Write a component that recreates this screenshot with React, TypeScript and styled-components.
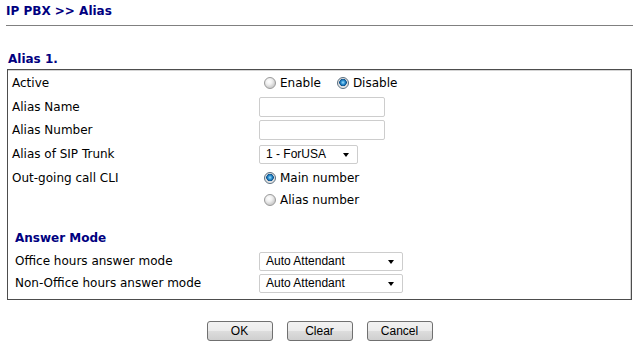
import React from "react";
import styled, { createGlobalStyle } from "styled-components";

const GlobalStyle = createGlobalStyle`
  body {
    margin: 0;
    background: #fff;
    font-family: "DejaVu Sans", Verdana, sans-serif;
    font-size: 12px;
    color: #000;
  }
`;

const NAVY = "#000080";

const App = () => {
  return (
    <Page>
      <GlobalStyle />
      <Title>IP PBX &gt;&gt; Alias</Title>
      <Rule />
      <SectionTitle>Alias 1.</SectionTitle>
      <Panel>
        <Row $h={24}>
          <Label>Active</Label>
          <Field>
            <Radio label="Enable" />
            <Radio label="Disable" checked gap={16} />
          </Field>
        </Row>
        <Row $h={23}>
          <Label>Alias Name</Label>
          <Field>
            <TextInput type="text" />
          </Field>
        </Row>
        <Row $h={24}>
          <Label>Alias Number</Label>
          <Field>
            <TextInput type="text" />
          </Field>
        </Row>
        <Row $h={24}>
          <Label>Alias of SIP Trunk</Label>
          <Field>
            <Select $w={99}>
              <span>1 - ForUSA</span>
              <Arrow />
            </Select>
          </Field>
        </Row>
        <Row $h={23}>
          <Label>Out-going call CLI</Label>
          <Field>
            <Radio label="Main number" checked />
          </Field>
        </Row>
        <Row $h={22}>
          <Label />
          <Field>
            <Radio label="Alias number" />
          </Field>
        </Row>

        <SubSection>
          <SubTitle>Answer Mode</SubTitle>
          <SubRow $h={22}>
            <Label>Office hours answer mode</Label>
            <Field>
              <Select $w={144}>
                <span>Auto Attendant</span>
                <Arrow />
              </Select>
            </Field>
          </SubRow>
          <SubRow $h={22}>
            <Label>Non-Office hours answer mode</Label>
            <Field>
              <Select $w={144}>
                <span>Auto Attendant</span>
                <Arrow />
              </Select>
            </Field>
          </SubRow>
        </SubSection>
      </Panel>
      <ButtonBar>
        <Button>OK</Button>
        <Button>Clear</Button>
        <Button>Cancel</Button>
      </ButtonBar>
    </Page>
  );
};

export default App;

function Radio({ label, checked, gap }: { label: string; checked?: boolean; gap?: number }) {
  return (
    <RadioLabel $gap={gap ?? 5}>
      <RadioDot $checked={!!checked} />
      {label}
    </RadioLabel>
  );
}

const Page = styled.div`
  padding: 4px 6px 0;
  width: 627px;
`;

const Title = styled.h1`
  margin: 0;
  font-size: 12px;
  line-height: 14px;
  font-weight: bold;
  color: ${NAVY};
`;

const Rule = styled.div`
  margin-top: 7px;
  border-top: 1px solid #808080;
`;

const SectionTitle = styled.h2`
  margin: 26px 0 0 2px;
  font-size: 12px;
  line-height: 14px;
  font-weight: bold;
  color: ${NAVY};
`;

const Panel = styled.div`
  margin: 3px 1px 0 1px;
  border: 1px solid #4d4d4d;
  box-shadow: inset 0 1px 0 #d4d4d4, inset -1px 0 0 #d4d4d4;
  padding: 1px 4px 5px;
`;

const Row = styled.div<{ $h: number }>`
  display: grid;
  grid-template-columns: 247px 1fr;
  align-items: center;
  height: ${(p) => p.$h}px;
`;

const SubRow = styled(Row)`
  grid-template-columns: 244px 1fr;
`;

const Label = styled.div`
  line-height: 14px;
  white-space: nowrap;
`;

const Field = styled.div`
  display: flex;
  align-items: center;
`;

const SubSection = styled.div`
  margin-top: 15px;
  padding-left: 3px;
`;

const SubTitle = styled.div`
  height: 24px;
  display: flex;
  align-items: center;
  font-weight: bold;
  color: ${NAVY};
`;

const RadioLabel = styled.label<{ $gap: number }>`
  display: flex;
  align-items: center;
  margin-left: ${(p) => p.$gap}px;
  line-height: 14px;
`;

const RadioDot = styled.span<{ $checked: boolean }>`
  box-sizing: border-box;
  width: 12px;
  height: 12px;
  border-radius: 50%;
  margin-right: 4px;
  border: 1px solid ${(p) => (p.$checked ? "#5a6f80" : "#9a9a9a")};
  background: ${(p) =>
    p.$checked
      ? "radial-gradient(circle at 50% 45%, #9fe0ff 0, #2b8fd0 2px, #0b4f8a 3.5px, #dcdcdc 4px, #f4f4f4 6px)"
      : "radial-gradient(circle at 40% 35%, #ffffff 0, #f0f0f0 3px, #cfcfcf 6px)"};
`;

const TextInput = styled.input`
  box-sizing: border-box;
  width: 126px;
  height: 20px;
  margin: 0;
  border: 1px solid #cdcdcd;
  border-radius: 2px;
  background: #fff;
  outline: none;
`;

const Select = styled.div<{ $w: number }>`
  box-sizing: border-box;
  width: ${(p) => p.$w}px;
  height: 19px;
  display: flex;
  align-items: center;
  justify-content: space-between;
  padding: 0 8px 0 6px;
  border: 1px solid #cdcdcd;
  border-radius: 2px;
  background: #fff;
  font-family: "Liberation Sans", Arial, sans-serif;
  font-size: 12px;
`;

const Arrow = styled.span`
  width: 0;
  height: 0;
  margin-top: 2px;
  border-left: 3.5px solid transparent;
  border-right: 3.5px solid transparent;
  border-top: 4px solid #000;
`;

const ButtonBar = styled.div`
  display: flex;
  justify-content: center;
  gap: 14px;
  margin-top: 21px;
`;

const Button = styled.button`
  box-sizing: border-box;
  width: 66px;
  height: 20px;
  padding: 0;
  border: 1px solid #707070;
  border-radius: 3px;
  background: linear-gradient(#f2f2f2 0%, #ebebeb 50%, #dddddd 51%, #cfcfcf 100%);
  font-family: "Liberation Sans", Arial, sans-serif;
  font-size: 12px;
  color: #000;
`;
